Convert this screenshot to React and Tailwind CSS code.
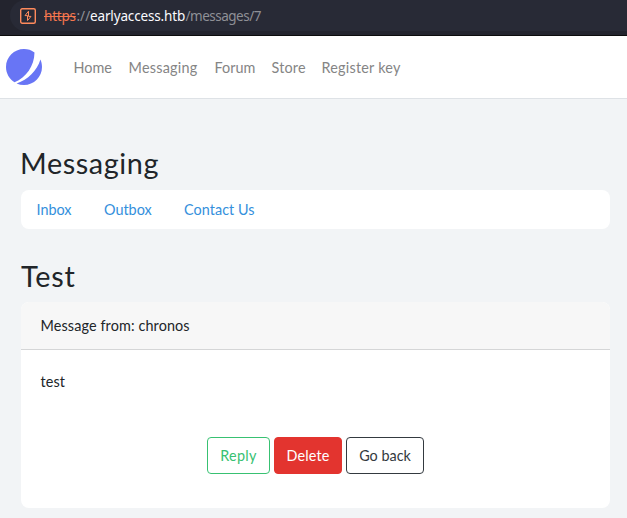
const navItems = [
  { label: 'Home', box: 'w-[39px]' },
  { label: 'Messaging', box: 'w-[70px] tracking-[0.25px]' },
  { label: 'Forum', box: 'w-[41px]' },
  { label: 'Store', box: 'w-[34px] tracking-[0.2px]' },
  { label: 'Register key', box: 'w-[80px] tracking-[0.22px]' },
];

const tabs = [
  { label: 'Inbox', box: 'w-[35.5px]' },
  { label: 'Outbox', box: 'w-[48px]' },
  { label: 'Contact Us', box: 'w-[72px] tracking-[0.06px]' },
];

function AddressBar() {
  return (
    <div className="h-9 border-b border-[#0c0c0d] bg-[#23242e]">
      <div className="ml-[10px] flex h-[31px] items-center rounded-l-2xl bg-[#282a36] pl-[10px]">
        <svg className="shrink-0" width="16" height="16" viewBox="0 0 16 16" fill="none" stroke="#ff8a5c">
          <rect x="0.7" y="0.7" width="14.6" height="14.6" rx="1.5" strokeWidth="1.4" />
          <path d="M8.5 3.2 L5 7.6 H7.5 V9 M7.5 12.6 L11 8.4 H8.5 V7 M8.5 3.2 V7.6 M7.5 8.4 V12.6" strokeWidth="1" />
        </svg>
        <div className="ml-2 flex whitespace-nowrap font-['Noto_Sans',sans-serif] text-[13.5px] leading-5 text-[#8f9096]">
          <span className="w-[32.5px] tracking-[-0.2px] text-[#f4764e] line-through">https</span>
          <span className="w-[13.5px]">://</span>
          <span className="w-[95.5px] tracking-[-0.15px] text-[#fbfbfe]">earlyaccess.htb</span>
          <span className="tracking-[-0.5px]">/messages/7</span>
        </div>
      </div>
    </div>
  );
}

function Logo() {
  return (
    <svg className="shrink-0" width="36" height="36" viewBox="0 0 48 48" fill="#6875f5">
      <path d="M11.395 44.428C4.557 40.198 0 32.632 0 24 0 10.745 10.745 0 24 0a23.891 23.891 0 0113.997 4.502c-.2 17.907-11.097 33.245-26.602 39.926z" />
      <path d="M14.134 45.885A23.914 23.914 0 0024 48c13.255 0 24-10.745 24-24 0-3.516-.756-6.856-2.115-9.866-4.659 15.143-16.608 27.092-31.75 31.751z" />
    </svg>
  );
}

export default function App() {
  return (
    <div className="h-[518px] w-[627px] overflow-hidden bg-[#f2f4f6] font-[Lato,sans-serif] text-[14.4px] leading-[23px] text-[#212529]">
      <AddressBar />
      <nav className="flex h-[63px] items-center border-b border-[#dee2e6] bg-white pl-[6px] text-[#858585]">
        <Logo />
        <ul className="ml-[31.5px] flex gap-4 whitespace-nowrap">
          {navItems.map(({ label, box }) => (
            <li key={label} className={box}>{label}</li>
          ))}
        </ul>
      </nav>
      <main className="w-[610px] pl-[21px] pt-[47px]">
        <h2 className="-ml-px h-[44px] text-[28.8px] leading-[35px] tracking-[0.6px]">Messaging</h2>
        <div className="flex h-[39px] items-center gap-8 whitespace-nowrap rounded-lg bg-white pl-[15.5px] text-[#3490dc]">
          {tabs.map(({ label, box }) => (
            <a key={label} className={box}>{label}</a>
          ))}
        </div>
        <h2 className="mt-[30px] h-[43px] text-[28.8px] leading-[35px] tracking-[0.8px]">Test</h2>
        <section className="h-[206px] overflow-hidden rounded-lg bg-white">
          <header className="flex h-12 items-center border-b border-[#d5d6d7] bg-[#f7f7f7] px-[19.5px] tracking-[0.12px]">
            Message from: chronos
          </header>
          <p className="px-[19.5px] pt-5 tracking-[0.1px]">test</p>
          <div className="mt-[44px] flex justify-center gap-1">
            <button className="h-[37px] w-[63px] rounded border border-[#38c172] tracking-[0.3px] text-[#38c172]">Reply</button>
            <button className="h-[37px] w-[68px] rounded border border-[#e3342f] bg-[#e3342f] tracking-[0.15px] text-white">Delete</button>
            <button className="h-[37px] w-[78px] rounded border border-[#343a40] text-[#343a40]">Go back</button>
          </div>
        </section>
      </main>
    </div>
  );
}
